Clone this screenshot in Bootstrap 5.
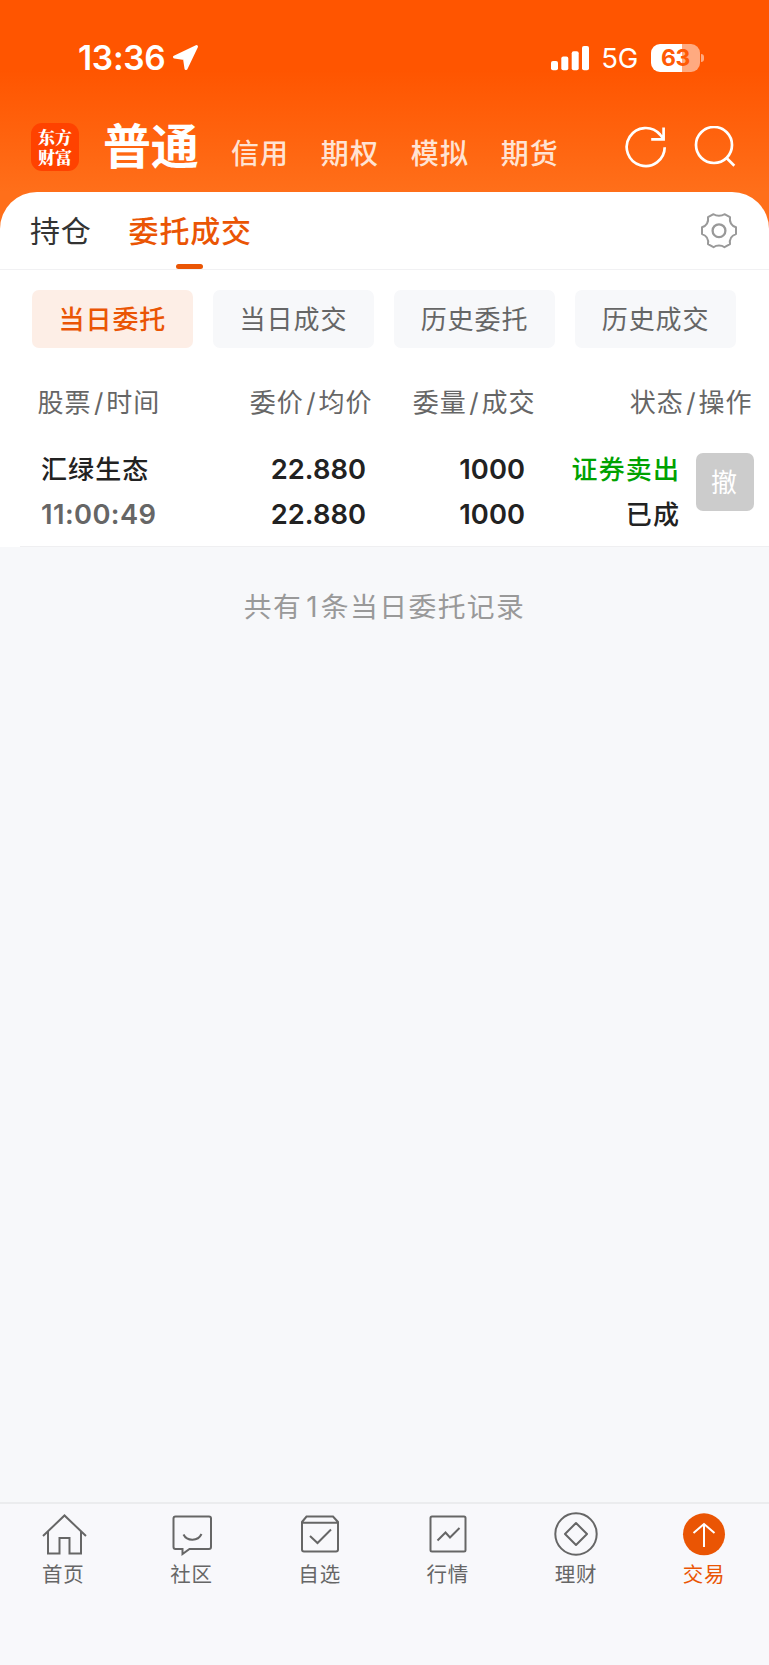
<!DOCTYPE html>
<html lang="zh-CN">
<head>
<meta charset="utf-8">
<meta name="viewport" content="width=device-width, initial-scale=1">
<title>委托成交</title>
<link href="https://cdn.jsdelivr.net/npm/bootstrap@5.3.0/dist/css/bootstrap.min.css" rel="stylesheet">
<style>
  :root { --brand: #ea5504; --ink: #222; --sub: #666; --page: #f7f8fa; }
  body { font-family: Inter, "Noto Sans CJK SC", sans-serif; background: var(--page); color: var(--ink); line-height: 1; overflow: hidden; }
  svg { display: block; flex: none; }
  .screen { height: 1665px; }
  .hero { height: 240px; background: linear-gradient(#ff5500 0, #ff5500 70px, #ff6f1a 192px); color: #fff; }
  .status { height: 116px; padding: 0 65px 0 78px; }
  .clock { font-size: 33.5px; font-weight: 600; letter-spacing: -.3px; margin-top: 1px; }
  .plane { margin-left: 7px; }
  .net { font-size: 27.5px; letter-spacing: -.3px; margin: 1px 13px 0 12px; }
  .battery { width: 49px; height: 28px; border-radius: 9px; background: linear-gradient(90deg, #fff 63%, #ffaa80 63%); color: #ff5a05; font-size: 23px; font-weight: 700; letter-spacing: -.5px; margin-top: -1px; padding-top: 1px; }
  .nub { width: 3px; height: 8px; border-radius: 0 4px 4px 0; background: #ffaa80; margin-left: 1px; }
  .accounts { height: 61px; padding: 0 33.5px 0 31px; }
  .logo { width: 48px; height: 48px; border-radius: 11px; background: #ff4200; font-family: "Noto Serif CJK SC", "Noto Sans CJK SC", serif; font-weight: 900; font-size: 17px; line-height: 19.5px; }
  .acct-on { font-size: 48px; font-weight: 700; letter-spacing: -.3px; margin-left: 24px; line-height: 60px; }
  .accts { margin-left: 32.5px; gap: 31.5px; padding-top: 15px; }
  .acct { font-size: 28px; font-weight: 500; letter-spacing: 1.2px; color: #ffe3d3; line-height: 43px; }
  .find { margin-left: 27px; }
  .sheet { margin-top: -48px; border-radius: 37px 37px 0 0; }
  .tabs { height: 78px; padding: 0 32px 0 30px; border-bottom: 1px solid #f1f1f3; font-size: 30px; letter-spacing: .8px; }
  .tab-off { color: #333; }
  .tab-on { color: var(--brand); font-weight: 500; margin-left: 37px; position: relative; }
  .tab-on::after { content: ""; position: absolute; width: 27px; height: 5px; border-radius: 2.5px; background: var(--brand); left: 47px; bottom: 0; }
  .chips { padding: 19.5px 33px 0 32px; gap: 20.3px; }
  .chip { height: 58px; border-radius: 7px; background: #f7f8fa; color: var(--sub); font-size: 26px; letter-spacing: .95px; padding-top: 3px; }
  .chip-on { background: #fdeee6; color: var(--brand); font-weight: 500; }
  .order-grid { display: grid; align-items: center; white-space: nowrap; }
  .order-head { grid-template-columns: 150px 185px 163px 217px; margin-left: 37.5px; height: 60px; margin-top: 25px; color: var(--sub); font-size: 26px; letter-spacing: .95px; }
  .slash { font-style: normal; margin: 0 2px 0 2.5px; }
  .order-row { grid-template: 45px 45px / 150px 175px 159px 155px 75px; padding: 15px 0 8px 41px; font-size: 26px; font-weight: 500; letter-spacing: 1.1px; }
  .num { font-size: 27.3px; font-weight: 600; letter-spacing: .05px; }
  .time { color: var(--sub); letter-spacing: .4px; }
  .sell { color: #00a200; }
  .cancel { grid-column: 5; grid-row: 1 / 3; width: 58px; height: 58px; border-radius: 7px; background: #ccc; color: #fff; font-size: 26px; letter-spacing: 0; font-weight: 400; margin: -21px 1px 0 auto; padding: 2px 2px 0 0; }
  .rule { height: 1px; margin-left: 20px; background: #efeff1; }
  .total { font-size: 27.8px; letter-spacing: 1.4px; color: #999; padding-top: 46px; line-height: 28px; }
  .total span { margin: 0 2px 0 4px; }
  .dock { height: 163px; border-top: 2px solid #ebecee; background: #f8f8fb; color: var(--sub); font-size: 20.5px; letter-spacing: .8px; padding-top: 6px; }
  .dock svg { width: 48px; height: 48px; fill: none; stroke: #666; stroke-width: 2; margin-left: -1px; }
  .dock span { line-height: 34px; margin-left: -1.5px; }
  .dock .on { color: var(--brand); }
</style>
</head>
<body>
<div class="screen d-flex flex-column">
  <header class="hero flex-shrink-0">
    <div class="status d-flex align-items-center">
      <span class="clock">13:36</span>
      <svg width="28" height="28" viewBox="0 0 28 28" class="plane" fill="#fff" stroke="#fff" stroke-width="3" stroke-linejoin="round"><path d="M24.500 2.500 2.500 13 12.500 14.500 14 24.500Z"/></svg>
      <svg class="ms-auto" width="38" height="25" viewBox="0 0 38 25" fill="#fff"><rect y="15" width="7" height="9.3" rx="2"/><rect x="10.3" y="10.5" width="7" height="13.8" rx="2"/><rect x="20.7" y="5.2" width="7" height="19.1" rx="2"/><rect x="31" width="7" height="24.3" rx="2"/></svg>
      <span class="net">5G</span>
      <div class="battery d-flex align-items-center justify-content-center">63</div>
      <div class="nub"></div>
    </div>
    <div class="accounts d-flex align-items-center">
      <div class="logo d-flex align-items-center justify-content-center text-center">东方<br>财富</div>
      <span class="acct-on">普通</span>
      <nav class="accts d-flex"><span class="acct">信用</span><span class="acct">期权</span><span class="acct">模拟</span><span class="acct">期货</span></nav>
      <svg class="ms-auto" width="42" height="42" viewBox="0 0 42 42" fill="none" stroke="#fff" stroke-width="2.7"><path d="M39.700 21.200A19 19 0 1 1 35 8.500L38.500 12.800M38.600 1.500V13.300H26.200"/></svg>
      <svg class="find" width="42" height="42" viewBox="0 0 42 42" fill="none" stroke="#fff" stroke-width="2.7"><circle cx="20" cy="19" r="18"/><path d="m32.300 31.800 8 8"/></svg>
    </div>
  </header>

  <main class="sheet bg-white flex-shrink-0">
    <div class="tabs d-flex align-items-stretch">
      <div class="tab-off d-flex align-items-center">持仓</div>
      <div class="tab-on d-flex align-items-center">委托成交</div>
      <svg class="ms-auto align-self-center" width="36" height="36" viewBox="0 0 36 36" fill="none" stroke="#999" stroke-width="2" stroke-linejoin="round"><path d="M12.500 1.200C15.500 3.300 20.500 3.300 23.500 1.200L29 4.200C28.300 9 30.500 12.800 35 14.300V21.100C30.500 22.600 28.300 26.500 29 31.200L23.500 34.200C20.500 32 15.500 32 12.500 34.200L7 31.200C7.700 26.500 5.500 22.600 1 21.100V14.300C5.500 12.800 7.700 9 7 4.200Z"/><circle cx="18" cy="17.700" r="6.400" stroke-width="2.300"/></svg>
    </div>
    <div class="chips d-flex">
      <div class="chip chip-on flex-fill d-flex align-items-center justify-content-center">当日委托</div>
      <div class="chip flex-fill d-flex align-items-center justify-content-center">当日成交</div>
      <div class="chip flex-fill d-flex align-items-center justify-content-center">历史委托</div>
      <div class="chip flex-fill d-flex align-items-center justify-content-center">历史成交</div>
    </div>
    <div class="order-grid order-head">
      <span>股票<i class="slash">/</i>时间</span><span class="text-end">委价<i class="slash">/</i>均价</span><span class="text-end">委量<i class="slash">/</i>成交</span><span class="text-end">状态<i class="slash">/</i>操作</span>
    </div>
    <div class="order-grid order-row">
      <span>汇绿生态</span><span class="num text-end">22.880</span><span class="num text-end">1000</span><span class="sell text-end">证券卖出</span>
      <span class="num time">11:00:49</span><span class="num text-end">22.880</span><span class="num text-end">1000</span><span class="text-end">已成</span>
      <div class="cancel d-flex align-items-center justify-content-center">撤</div>
    </div>
    <div class="rule"></div>
  </main>
  <div class="total text-center">共有<span>1</span>条当日委托记录</div>

  <footer class="dock mt-auto flex-shrink-0 d-flex text-center">
    <div class="col-2 d-flex flex-column align-items-center"><svg viewBox="0 0 48 48"><path d="M3 26 24.500 5.500 46 26M8 21.500V43.500H19.500V28H29.500V43.500H41V21.500"/></svg><span>首页</span></div>
    <div class="col-2 d-flex flex-column align-items-center"><svg viewBox="0 0 48 48"><path d="M7.500 6.500H41Q43 6.500 43 8.500V37Q43 39 41 39H21.500L14.500 44V39H7.500Q5.500 39 5.500 37V8.500Q5.500 6.500 7.500 6.500ZM15.500 24.500C19 31.500 30 31.500 33.500 24"/></svg><span>社区</span></div>
    <div class="col-2 d-flex flex-column align-items-center"><svg viewBox="0 0 48 48"><path d="M6 12 10.500 6.500H37L42 12V39.500Q42 41.500 40 41.500H8Q6 41.500 6 39.500ZM6 12.700H42M14 26 21.500 33 35 19.500"/></svg><span>自选</span></div>
    <div class="col-2 d-flex flex-column align-items-center"><svg viewBox="0 0 48 48"><rect x="6.500" y="6.500" width="35" height="35" rx="1.500"/><path d="m13.500 30.500 8-8 4.500 5 9.500-9.500"/></svg><span>行情</span></div>
    <div class="col-2 d-flex flex-column align-items-center"><svg viewBox="0 0 48 48"><circle cx="24" cy="24" r="20.700"/><path d="M24 13 35 24 24 35 13 24Z" stroke-linejoin="round"/></svg><span>理财</span></div>
    <div class="col-2 d-flex flex-column align-items-center"><svg viewBox="0 0 48 48"><circle cx="24" cy="24.300" r="21" fill="#ea5504" stroke="none"/><path d="M24 37V14M13.500 23 24 14 34.500 23" stroke="#fff"/></svg><span class="on">交易</span></div>
  </footer>
</div>
<script src="https://cdn.jsdelivr.net/npm/bootstrap@5.3.0/dist/js/bootstrap.bundle.min.js"></script>
</body>
</html>
